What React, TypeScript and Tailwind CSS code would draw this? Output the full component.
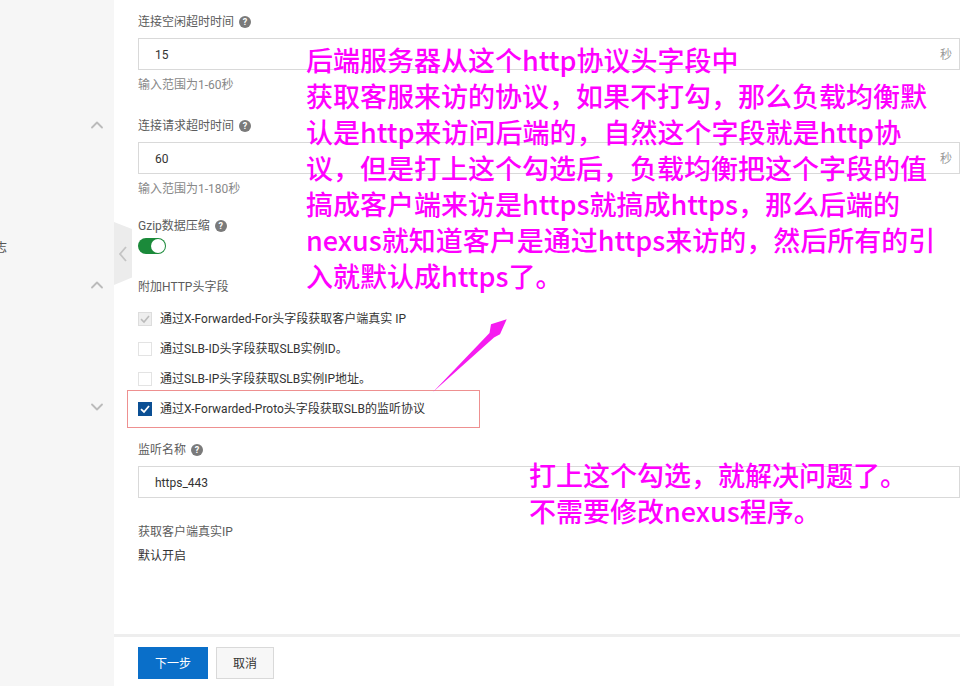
import React from "react";
import { ChevronUp, ChevronDown } from "lucide-react";

const Help = () => (
  <span className="ml-[5px] inline-flex h-[12px] w-[12px] items-center justify-center rounded-full bg-[#7a7a7a] text-[9px] font-bold leading-none text-white">?</span>
);

const Label = ({ children, help, cls }: { children: React.ReactNode; help?: boolean; cls?: string }) => (
  <div className={`flex h-[18px] items-center pt-[2px] text-[12px] leading-[16px] text-[#5c5c5c] ${cls ?? ""}`}>
    {children}
    {help && <Help />}
  </div>
);

const Field = ({ value, unit }: { value: string; unit?: boolean }) => (
  <div className="mt-[8px] flex h-[32px] w-[822px] items-center justify-between border border-[#d9d9d9] bg-white pl-[16px] pr-[7px] pt-[2px] text-[12px] text-[#333]">
    <span>{value}</span>
    {unit && <span className="text-[#999]">秒</span>}
  </div>
);

const Check = ({ label, state }: { label: string; state: "off" | "disabled" | "on" }) => (
  <div className="flex h-[30px] items-center pt-[2px] text-[12px] text-[#333]">
    {state === "on" && (
      <span className="mr-[8px] flex h-[14px] w-[14px] items-center justify-center bg-[#0b4f94]">
        <svg width="12" height="12" viewBox="0 0 12 12" fill="none" stroke="#fff" strokeWidth="1.8"><path d="M2 6.2 5 9l5-6" /></svg>
      </span>
    )}
    {state === "disabled" && (
      <span className="mr-[8px] flex h-[14px] w-[14px] items-center justify-center border border-[#ddd] bg-[#eee]">
        <svg width="12" height="12" viewBox="0 0 12 12" fill="none" stroke="#bbb" strokeWidth="1.6"><path d="M2 6.2 5 9l5-6" /></svg>
      </span>
    )}
    {state === "off" && <span className="mr-[8px] h-[14px] w-[14px] border border-[#e3e3e3] bg-white" />}
    <span>{label}</span>
  </div>
);

export default function App() {
  return (
    <div className="relative flex h-[686px] w-[960px] overflow-hidden bg-white font-['Roboto','Noto_Sans_CJK_SC',sans-serif]">
      <aside className="flex w-[114px] shrink-0 flex-col items-end overflow-hidden bg-[#f6f6f6] pr-[7px] text-[#bbb]">
        <ChevronUp size={20} strokeWidth={2.2} className="mt-[115px]" />
        <span className="mt-[104px] h-[18px] w-[107px] text-[12px] leading-[18px] text-[#555]"><span className="-ml-[5px] inline-block">志</span></span>
        <ChevronUp size={20} strokeWidth={2.2} className="mt-[18px]" />
        <ChevronDown size={20} strokeWidth={2.2} className="mt-[102px]" />
      </aside>

      <main className="flex min-w-0 flex-1 flex-col">
        <div className="h-[634px] pl-[24px] pt-[12px]">
          <Label help>连接空闲超时时间</Label>
          <Field value="15" unit />
          <div className="mt-[5px] h-[18px] pt-[1px] text-[12px] leading-[18px] text-[#888]">输入范围为1-60秒</div>
          <Label help cls="mt-[23px]">连接请求超时时间</Label>
          <Field value="60" unit />
          <div className="mt-[5px] h-[18px] pt-[1px] text-[12px] leading-[18px] text-[#888]">输入范围为1-180秒</div>
          <Label help cls="mt-[19px]">Gzip数据压缩</Label>
          <div className="mt-[4px] flex h-[16px] w-[28px] items-center justify-end rounded-full bg-[#1b8a3a] pr-[1px]">
            <span className="h-[14px] w-[14px] rounded-full bg-white" />
          </div>
          <Label cls="mt-[23px]">附加HTTP头字段</Label>
          <div className="mt-[8px]">
            <Check state="disabled" label="通过X-Forwarded-For头字段获取客户端真实 IP" />
            <Check state="off" label="通过SLB-ID头字段获取SLB实例ID。" />
            <Check state="off" label="通过SLB-IP头字段获取SLB实例IP地址。" />
            <Check state="on" label="通过X-Forwarded-Proto头字段获取SLB的监听协议" />
          </div>
          <Label help cls="mt-[17px]">监听名称</Label>
          <Field value="https_443" />
          <Label cls="mt-[24px]">获取客户端真实IP</Label>
          <div className="mt-[6px] h-[18px] pt-[1px] text-[12px] leading-[18px] text-[#333]">默认开启</div>
        </div>
        <footer className="flex flex-1 items-start gap-[8px] border-t-[3px] border-[#eee] pl-[24px] pt-[10px]">
          <button className="h-[32px] w-[70px] bg-[#0a6fc9] pt-[2px] text-[12px] text-white">下一步</button>
          <button className="h-[32px] w-[58px] border border-[#d9d9d9] bg-[#f7f7f7] pt-[2px] text-[12px] text-[#333]">取消</button>
        </footer>
      </main>

      {/* collapse handle */}
      <div className="absolute left-[114px] top-[222px] flex h-[63px] w-[18px] items-center justify-center bg-[#ececec] [clip-path:polygon(0_0,100%_11%,100%_88%,0_100%)]">
        <svg width="10" height="16" viewBox="0 0 10 16" fill="none" stroke="#c4c4c4" strokeWidth="1.8"><path d="M8 1 2 8l6 7" /></svg>
      </div>

      {/* annotations */}
      <div className="absolute left-[127px] top-[390px] h-[38px] w-[353px] border-[1.5px] border-[#ee9090]" />
      <svg className="absolute left-[425px] top-[312px]" width="90" height="88" viewBox="0 0 90 88">
        <path d="M8 80 L64.5 21 L66 12.3 L81.7 7.3 L75 22.3 L69 25.5 Z" fill="#f61cf0" />
      </svg>
      <div className="absolute left-[306px] top-[42px] whitespace-nowrap font-['Noto_Sans_CJK_SC',sans-serif] text-[27px] font-medium leading-[36px] text-[#f0f]">
        后端服务器从这个http协议头字段中<br />
        获取客服来访的协议，如果不打勾，那么负载均衡默<br />
        认是http来访问后端的，自然这个字段就是http协<br />
        议，但是打上这个勾选后，负载均衡把这个字段的值<br />
        搞成客户端来访是https就搞成https，那么后端的<br />
        nexus就知道客户是通过https来访的，然后所有的引<br />
        入就默认成https了。
      </div>
      <div className="absolute left-[529px] top-[457px] whitespace-nowrap font-['Noto_Sans_CJK_SC',sans-serif] text-[27px] font-medium leading-[36px] text-[#f0f]">
        打上这个勾选，就解决问题了。<br />
        不需要修改nexus程序。
      </div>
    </div>
  );
}
